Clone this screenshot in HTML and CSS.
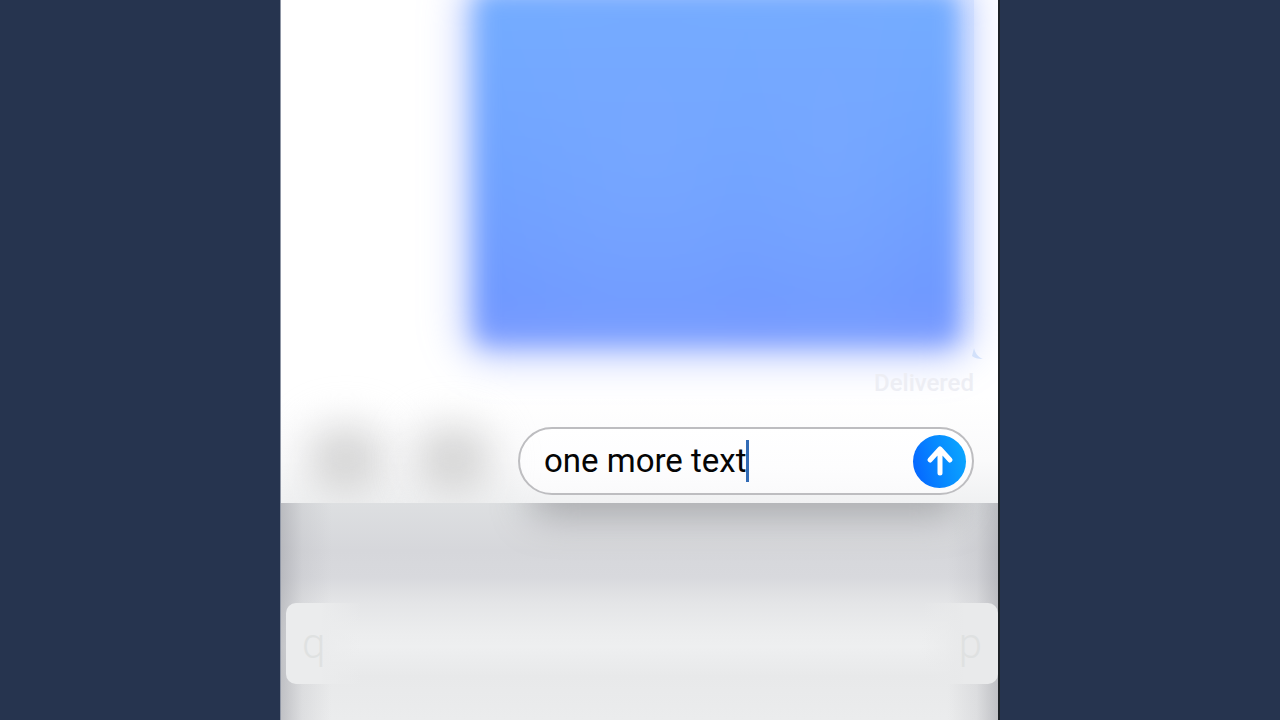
FILE: index.html
```html
<!DOCTYPE html>
<html lang="en">
<head>
    <meta charset="utf-8">
    <meta name="viewport" content="width=device-width,initial-scale=1">
    <title>Messages</title>
    <link rel="stylesheet" href="styles.css">
</head>
<body>
    <main class="phone">
        <section class="thread">
            <div class="bubble">
                <svg class="tail" width="12" height="12" viewBox="0 0 12 12" aria-hidden="true"><path d="M2 0C3 5 6 9 11 11C6 11 2 10 0 8Z"/></svg>
            </div>
            <p class="status">Delivered</p>
        </section>

        <form class="compose">
            <div class="tools">
                <button type="button" class="tool" aria-label="Camera"></button>
                <button type="button" class="tool" aria-label="Apps"></button>
            </div>
            <div class="field">
                <input class="message" type="text" value="one more text" aria-label="Message">
                <span class="caret"></span>
                <button type="button" class="send" aria-label="Send">
                    <svg width="28" height="32" viewBox="0 0 28 32" aria-hidden="true"><path d="M14 28V4M4 15L14 4L24 15"/></svg>
                </button>
            </div>
        </form>

        <section class="keyboard">
            <div class="keys">
                <button type="button" class="key first">q</button>
                <button type="button" class="key last">p</button>
            </div>
        </section>
    </main>
</body>
</html>
```
FILE: styles.css
```css
* {box-sizing: border-box; margin: 0; padding: 0;}

body {
    background: #26344f;
    font-family: Roboto, "Liberation Sans", sans-serif;
}

button {
    border: 0;
    background: none;
}

.phone {
    display: flex;
    flex-direction: column;
    max-width: 720px;
    min-height: 100vh;
    margin: 0 auto;
    background: #fff;
    border-left: 1px solid #8f96a5;
    border-right: 2px solid #1d2227;
    overflow: hidden;
}

/* Conversation */
.thread {
    display: flex;
    flex-direction: column;
    align-items: flex-end;
    padding: 0 24px;
}

.bubble {
    position: relative;
    width: 75%;
    height: 360px;
}

.bubble::before {
    content: "";
    position: absolute;
    inset: -10px 14px 14px 2px;
    border-radius: 16px;
    background:
        radial-gradient(ellipse 180px 260px at 36% 46%, #7ba9ff90, #7ba9ff00),
        radial-gradient(ellipse 100px 260px at 74% 46%, #7ba9ff90, #7ba9ff00),
        linear-gradient(#74adff, #70a3ff 50%, #7099ff 88%, #7f9eff);
    box-shadow: 0 0 30px 12px #7b98ff80;
    filter: blur(12px);
}

.bubble::after {
    content: "";
    position: absolute;
    inset: 0 0 10px auto;
    width: 18px;
    background: linear-gradient(90deg, #b0caff00, #b5ccff50);
    mask-image: linear-gradient(#000 85%, transparent);
}

.tail {
    position: absolute;
    right: -10px;
    bottom: 0;
    fill: #d3e1fb;
}

.status {
    position: relative;
    padding: 10px 0 0;
    color: #edeef4;
    font-size: 24px;
    font-weight: 500;
    line-height: 26px;
}

/* Compose bar */
.compose {
    display: flex;
    align-items: center;
    gap: 32px;
    padding: 31px 24px 8px 32px;
    background: linear-gradient(#fff0, #fafafb 60%, #f0f1f2);
}

.tools {
    display: flex;
    flex: 1;
    justify-content: space-between;
}

.tool {
    width: 66px;
    height: 60px;
    border-radius: 24px;
    background: #d6d6d6;
    box-shadow: 0 0 16px 10px #e0e0e080;
    filter: blur(18px);
}

.field {
    display: flex;
    align-items: center;
    width: 456px;
    height: 68px;
    padding: 0 6px 0 24px;
    border: 2px solid #bdbdc0;
    border-radius: 34px;
    background: linear-gradient(#fff, #fdfdfe 60%, #fafafb);
}

.message {
    width: 202px;
    border: 0;
    outline: 0;
    background: none;
    color: #050505;
    font: 33px/40px Roboto, "Liberation Sans", sans-serif;
}

.caret {
    width: 3px;
    height: 42px;
    background: #326bb5;
}

.send {
    display: flex;
    align-items: center;
    justify-content: center;
    width: 53px;
    height: 53px;
    margin-left: auto;
    border-radius: 50%;
    background: linear-gradient(75deg, #0669ff 10%, #0789ff 50%, #0cabff);
}

.send svg {
    fill: none;
    stroke: #fff;
    stroke-width: 5;
    stroke-linecap: round;
    stroke-linejoin: round;
}

/* Keyboard */
.keyboard {
    position: relative;
    flex: 1;
    padding: 100px 0 36px 5px;
    background:
        linear-gradient(90deg, #a4a5ab99, #b5b6bb40 3%, #c5c6ca00 7%, #c5c6ca00 93%, #b5b6bb40 97%, #a4a5ab99),
        linear-gradient(#dddfe1, #d6d7db 22%, #d8d9dd 34%, #e4e5e7 46%, #ecedee 60%, #eeeff0 66%, #e8e9ea 80%, #ebeced);
    overflow: hidden;
}

/* shade that the message field throws on the keyboard */
.keyboard::before {
    content: "";
    position: absolute;
    inset: -40px 40px auto 35%;
    height: 52px;
    background: #96979b;
    opacity: 0.8;
    filter: blur(20px);
}

.keys {
    display: flex;
    justify-content: space-between;
}

.key {
    width: 76px;
    height: 81px;
    padding: 0 16px;
    color: #dfe1e1;
    font: 300 42px/76px Roboto, "Liberation Sans", sans-serif;
}

.first {
    border-radius: 10px 0 0 10px;
    background: linear-gradient(90deg, #ebeced 45%, #ebeced00);
    text-align: left;
}

.last {
    border-radius: 0 10px 10px 0;
    background: linear-gradient(270deg, #e9eaeb 45%, #e9eaeb00);
    text-align: right;
}
```
